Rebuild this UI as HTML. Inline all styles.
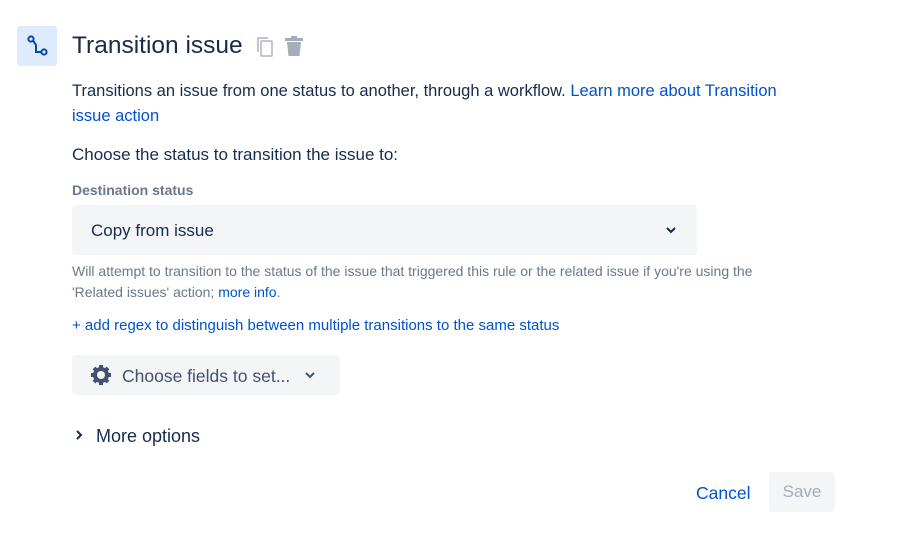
<!DOCTYPE html>
<html><head><meta charset="utf-8"><style>
body{margin:0;width:921px;height:544px;background:#fff;font-family:"Liberation Sans",sans-serif;color:#172b4d;position:relative;overflow:hidden}
.a{position:absolute;white-space:nowrap}
a{color:#0052cc;text-decoration:none}
</style></head><body>
<div class="a" style="left:17px;top:26px;width:40px;height:40px;background:#deebff;border-radius:3px">
<svg width="40" height="40" viewBox="0 0 40 40"><circle cx="14" cy="13" r="2.6" fill="none" stroke="#0747a6" stroke-width="2"/><circle cx="27" cy="26" r="2.6" fill="none" stroke="#0747a6" stroke-width="2"/><path d="M16 14.5 L19 19 L19 26 L24.4 26" fill="none" stroke="#0747a6" stroke-width="2"/></svg></div>
<div class="a" style="left:72px;top:32px;font-size:24.5px;color:#172b4d">Transition issue</div>
<svg class="a" style="left:255px;top:35px" width="22" height="24" viewBox="0 0 22 24"><rect x="6" y="6" width="11" height="15" rx="1" fill="none" stroke="#c1c7d0" stroke-width="2"/><path d="M3 17V3h10" fill="none" stroke="#c1c7d0" stroke-width="2"/></svg>
<svg class="a" style="left:283px;top:35px" width="22" height="24" viewBox="0 0 22 24"><rect x="2" y="3" width="18" height="3" fill="#a5adba"/><rect x="8" y="1" width="6" height="3" fill="#a5adba"/><path d="M4 7h14l-1.5 14h-11z" fill="#a5adba"/></svg>
<div class="a" style="left:72px;top:79px;font-size:16.5px;line-height:25px;white-space:normal;width:720px">Transitions an issue from one status to another, through a workflow. <a>Learn more about Transition issue action</a></div>
<div class="a" style="left:72px;top:145px;font-size:17px">Choose the status to transition the issue to:</div>
<div class="a" style="left:72px;top:182px;font-size:14px;font-weight:bold;color:#6b778c">Destination status</div>
<div class="a" style="left:72px;top:205px;width:625px;height:50px;background:#f4f5f7;border-radius:3px"></div>
<div class="a" style="left:91px;top:221px;font-size:17px">Copy from issue</div>
<svg class="a" style="left:665px;top:225px" width="12" height="10"><path d="M2 3l4 4 4-4" fill="none" stroke="#172b4d" stroke-width="2"/></svg>
<div class="a" style="left:72px;top:261px;font-size:14px;line-height:21px;color:#6b778c;white-space:normal;width:735px">Will attempt to transition to the status of the issue that triggered this rule or the related issue if you're using the 'Related issues' action; <a>more info</a>.</div>
<div class="a" style="left:72px;top:317px;font-size:15px;color:#0052cc">+ add regex to distinguish between multiple transitions to the same status</div>
<div class="a" style="left:72px;top:355px;width:268px;height:40px;background:#f4f5f7;border-radius:3px"></div>
<svg class="a" style="left:89px;top:363px" width="24" height="24" viewBox="0 0 24 24"><g fill="#42526e"><circle cx="12" cy="12" r="8"/><g stroke="#42526e" stroke-width="4"><path d="M12 2v20M2 12h20M5 5l14 14M19 5L5 19"/></g></g><circle cx="12" cy="12" r="4" fill="#f4f5f7"/></svg>
<div class="a" style="left:122px;top:366px;font-size:17.5px;color:#42526e">Choose fields to set...</div>
<svg class="a" style="left:304px;top:370px" width="12" height="10"><path d="M2 3l4 4 4-4" fill="none" stroke="#42526e" stroke-width="2"/></svg>
<svg class="a" style="left:74px;top:429px" width="10" height="12"><path d="M3 2l4 4-4 4" fill="none" stroke="#172b4d" stroke-width="2"/></svg>
<div class="a" style="left:96px;top:426px;font-size:18px">More options</div>
<div class="a" style="left:696px;top:483px;font-size:17.5px;color:#0052cc">Cancel</div>
<div class="a" style="left:769px;top:472px;width:66px;height:40px;background:#f4f5f7;border-radius:3px;color:#a5adba;font-size:17px;text-align:center;line-height:40px">Save</div>
</body></html>
